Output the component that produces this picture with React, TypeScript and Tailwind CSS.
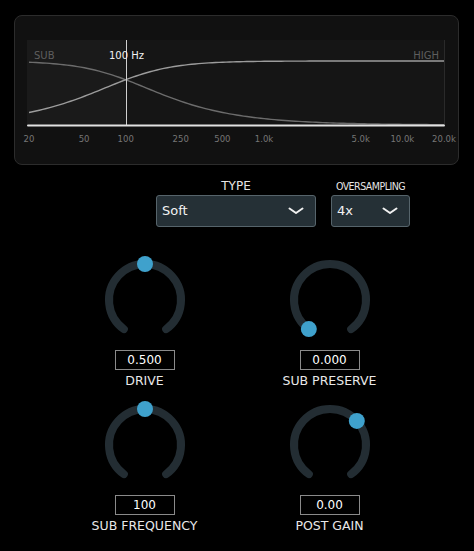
import React from 'react'

// crossover display: log frequency axis from 20 Hz to 20 kHz
const X0 = 29
const X1 = 444
const TOP = 61
const BASE = 125
const FC = 100

const fx = (f: number) => X0 + ((X1 - X0) * Math.log10(f / 20)) / 3

const curve = (kind: 'low' | 'high') => {
  const pts: string[] = []
  for (let i = 0; i <= 120; i++) {
    const f = 20 * Math.pow(1000, i / 120)
    const r = f / FC
    const mag = kind === 'low' ? 1 / Math.sqrt(1 + r * r) : r / Math.sqrt(1 + r * r)
    const y = BASE - (BASE - TOP) * mag
    pts.push(`${fx(f).toFixed(2)},${y.toFixed(2)}`)
  }
  return 'M' + pts.join(' L')
}

const ticks: [number, string][] = [
  [20, '20'],
  [50, '50'],
  [100, '100'],
  [250, '250'],
  [500, '500'],
  [1000, '1.0k'],
  [5000, '5.0k'],
  [10000, '10.0k'],
  [20000, '20.0k'],
]

function CrossoverPanel() {
  const xc = fx(FC)
  return (
    <div className="ml-[14px] w-[445px] h-[150px] rounded-[8px] border border-[#2c2c2c] bg-[#111111] overflow-hidden">
      <svg width={443} height={148} viewBox="15 16 443 148" className="block">
        <rect x={27} y={40} width={418} height={86} fill="#151515" />
        <rect x={27} y={40} width={xc - 27} height={86} fill="#1a1a1a" />
        <line x1={444.5} y1={40} x2={444.5} y2={125} stroke="#2a2a2a" strokeWidth={1} />
        <path d={curve('low')} fill="none" stroke="#6c6c6c" strokeWidth={1.4} />
        <path d={curve('high')} fill="none" stroke="#9c9c9c" strokeWidth={1.4} />
        <line x1={Math.round(xc) + 0.5} y1={40} x2={Math.round(xc) + 0.5} y2={125} stroke="#d0d0d0" strokeWidth={1} />
        <line x1={28} y1={125.5} x2={444} y2={125.5} stroke="#e2e2e2" strokeWidth={2} strokeLinecap="round" />
        <text x={34} y={59} fontSize={10} fill="#5e5e5e" fontFamily="DejaVu Sans, sans-serif">
          SUB
        </text>
        <text x={439} y={59} fontSize={10} fill="#5e5e5e" textAnchor="end" fontFamily="DejaVu Sans, sans-serif">
          HIGH
        </text>
        <text x={109} y={59} fontSize={10} fill="#f2f2f2" fontFamily="DejaVu Sans, sans-serif">
          100 Hz
        </text>
        {ticks.map(([f, label]) => (
          <text
            key={label}
            x={fx(f)}
            y={141.5}
            fontSize={8.5}
            fill="#767676"
            textAnchor="middle"
            fontFamily="DejaVu Sans, sans-serif"
          >
            {label}
          </text>
        ))}
      </svg>
    </div>
  )
}

function Chevron() {
  return (
    <svg width={16} height={8} viewBox="0 0 16 8" className="block">
      <path d="M1.5 1.5 L8 6 L14.5 1.5" fill="none" stroke="#f0f0f0" strokeWidth={2} strokeLinecap="round" strokeLinejoin="round" />
    </svg>
  )
}

function Select({ label, value, width, labelClass }: { label: string; value: string; width: string; labelClass: string }) {
  return (
    <div className={`flex flex-col items-center ${width}`}>
      <div className={`h-[14px] leading-[14px] mb-[2px] text-[#e6e6e6] whitespace-nowrap ${labelClass}`}>{label}</div>
      <div className="w-full h-[32px] flex items-center justify-between rounded-[3px] border border-[#56646b] bg-[#253036] pl-[5px] pr-[11px]">
        <span className="text-[13px] text-[#f2f2f2]">{value}</span>
        <Chevron />
      </div>
    </div>
  )
}

// knob sweeps 288 degrees, angle measured clockwise from 12 o'clock
const SWEEP = 144
const R = 36

const polar = (deg: number) => {
  const a = (deg * Math.PI) / 180
  return { x: 40 + R * Math.sin(a), y: 40 - R * Math.cos(a) }
}

function Knob({ pos, value, label }: { pos: number; value: string; label: string }) {
  const s = polar(-SWEEP)
  const e = polar(SWEEP)
  const d = polar(-SWEEP + pos * SWEEP * 2)
  return (
    <div className="w-[120px] flex flex-col items-center">
      <svg width={80} height={80} viewBox="0 0 80 80" className="block overflow-visible">
        <path
          d={`M${s.x} ${s.y} A${R} ${R} 0 1 1 ${e.x} ${e.y}`}
          fill="none"
          stroke="#232d33"
          strokeWidth={8}
          strokeLinecap="round"
        />
        <circle cx={d.x} cy={d.y} r={8} fill="#3fa1cc" />
      </svg>
      <div className="mt-[10px] w-[60px] h-[20px] flex items-center justify-center border border-[#8a8a8a] bg-black text-[12px] text-white leading-none">
        {value}
      </div>
      <div className="mt-[3px] h-[16px] leading-[16px] text-[12.5px] text-[#e8e8e8] whitespace-nowrap">{label}</div>
    </div>
  )
}

export default function App() {
  return (
    <div className="w-[474px] h-[551px] bg-black pt-[15px] font-['DejaVu_Sans',sans-serif] overflow-hidden">
      <CrossoverPanel />

      <div className="mt-[14px] flex items-end pl-[156px] gap-[15px]">
        <Select label="TYPE" value="Soft" width="w-[160px]" labelClass="text-[12px]" />
        <Select
          label="OVERSAMPLING"
          value="4x"
          width="w-[79px]"
          labelClass="text-[10.5px] tracking-[-0.5px] font-['DejaVu_Sans_Condensed',sans-serif]"
        />
      </div>

      <div className="mt-[33px] grid grid-cols-[120px_120px] justify-center gap-x-[65px] gap-y-[16px]">
        <Knob pos={0.5} value="0.500" label="DRIVE" />
        <Knob pos={0} value="0.000" label="SUB PRESERVE" />
        <Knob pos={0.5} value="100" label="SUB FREQUENCY" />
        <Knob pos={0.667} value="0.00" label="POST GAIN" />
      </div>
    </div>
  )
}
